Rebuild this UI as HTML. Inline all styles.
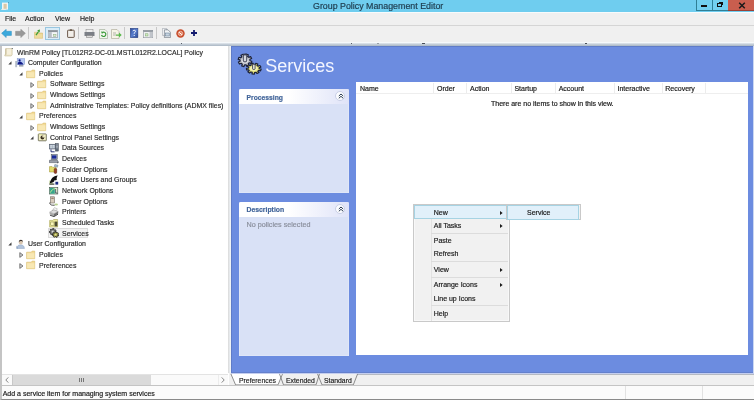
<!DOCTYPE html>
<html><head><meta charset="utf-8">
<style>
*{margin:0;padding:0;box-sizing:border-box}
html,body{width:754px;height:400px;overflow:hidden;background:#f0f0f0}
body{position:relative;filter:opacity(1);font-family:"Liberation Sans",sans-serif;font-size:7px;color:#1a1a1a}
.a{position:absolute}
.t{position:absolute;white-space:pre;line-height:1;-webkit-text-stroke:.18px currentColor}
#title{left:0;top:0;width:754px;height:12px;background:#6fcdef}
#menubar{left:0;top:12px;width:754px;height:14px;background:#f0f0f0;border-top:1px solid #f8fbfc;border-bottom:1px solid #d5d5d5}
#toolbar{left:0;top:26px;width:754px;height:17px;background:#f0f0f0}
#band{left:0;top:42px;width:754px;height:4px;background:linear-gradient(#f6f9fb 0,#f6f9fb 18%,#cdd6df 45%,#aab7c4 100%)}
#left{left:0;top:46px;width:229px;height:340px;background:#fff;border-left:2px solid #c4c4c4}
#split{left:228px;top:46px;width:3px;height:327px;background:linear-gradient(90deg,#d9d9d9,#e9ecef 60%,#f4f7fa)}
#blue{left:231px;top:46px;width:522px;height:326.5px;background:#6c8ce0;box-shadow:inset 1px 1px 0 #5f7cc8,inset 0 -1px 0 #6480cc}
#tabs{left:231px;top:373px;width:523px;height:13px;background:#f0f0f0}
#status{left:0;top:385px;width:754px;height:15px;background:#fbfbfb;border-top:1px solid #c4c4c4;border-bottom:1px solid #8a8a8a;border-left:2px solid #c4c4c4}
.tree .t{font-size:7.8px;transform:scaleX(0.89);transform-origin:0 0;color:#2a2a2a}
.panel{position:absolute;background:#d9e1f6;border-radius:2px 2px 0 0;box-shadow:inset 0 0 0 .6px #e6ebfa}
.phead{position:absolute;left:0;top:0;right:0;height:14px;border-radius:2px 2px 0 0;background:linear-gradient(90deg,#fff 0%,#fff 45%,#dfe3f8 100%)}
.circ{position:absolute;width:10px;height:10px;border-radius:50%;background:#fbfcff;border:1px solid #c9cfe6}
.menu .t{font-size:7px}
</style></head><body>

<!-- title bar -->
<div id="title" class="a">
  <svg class="a" style="left:1px;top:1.5px" width="9" height="9" viewBox="0 0 9 9"><rect x="1" y=".6" width="6" height="7" fill="#f4f6f2"/><rect x="2.5" y="1.8" width="3.2" height="5" fill="#d9c8a8"/><path d="M.3 7.5h4.5" stroke="#e8f0ec" stroke-width="1"/><path d="M7 1l.8-.6" stroke="#3a5a6a" stroke-width=".6"/></svg>
  <div class="t" style="left:313px;top:2px;font-size:8.85px;color:#1d3a4c">Group Policy Management Editor</div>
  <div class="a" style="left:696px;top:0;width:17px;height:11px;border-left:1px solid #2f7f96;border-bottom:1px solid #2f7f96;background:#72d0f0"></div>
  <div class="a" style="left:701px;top:5.3px;width:6px;height:1.6px;background:#111"></div>
  <div class="a" style="left:712px;top:0;width:17px;height:11px;border-left:1px solid #2f7f96;border-bottom:1px solid #2f7f96;background:#72d0f0"></div>
  <div class="a" style="left:717px;top:3px;width:5px;height:4px;border:1.4px solid #111"></div>
  <div class="a" style="left:719px;top:1.5px;width:4px;height:3px;border-top:1px solid #111;border-right:1px solid #111"></div>
  <div class="a" style="left:728px;top:0;width:26px;height:11px;background:#c95e4e;border-bottom:1px solid #9a4034"></div>
  <svg class="a" style="left:738px;top:2px" width="8" height="7" viewBox="0 0 8 7"><path d="M1.2 .8l5.6 5.4M6.8 .8L1.2 6.2" stroke="#1a1a1a" stroke-width="1.5"/></svg>
</div>

<!-- menu bar -->
<div id="menubar" class="a">
  <div class="t" style="left:5px;top:1.9px;font-size:7.6px;transform:scaleX(.92);transform-origin:0 0">File</div>
  <div class="t" style="left:25px;top:1.9px;font-size:7.6px;transform:scaleX(.92);transform-origin:0 0">Action</div>
  <div class="t" style="left:55px;top:1.9px;font-size:7.6px;transform:scaleX(.92);transform-origin:0 0">View</div>
  <div class="t" style="left:80px;top:1.9px;font-size:7.6px;transform:scaleX(.92);transform-origin:0 0">Help</div>
</div>

<!-- toolbar -->
<div id="toolbar" class="a"></div>
<!-- toolbar icons -->
<svg class="a" style="left:1px;top:29px" width="11" height="9" viewBox="0 0 11 9"><path d="M0.6 4.3L5.2 .3v2h5.2v4.1H5.2v2.2z" fill="#3ba9dc" stroke="#2a8cc0" stroke-width=".5" stroke-linejoin="round"/></svg>
<svg class="a" style="left:14.5px;top:29px" width="11" height="9" viewBox="0 0 11 9"><path d="M10.4 4.3L5.8 .3v2H.6v4.1h5.2v2.2z" fill="#989898" stroke="#8a8a8a" stroke-width=".5" stroke-linejoin="round"/></svg>
<div class="a" style="left:27.5px;top:27px;width:1px;height:12px;background:#c8c8c8"></div>
<svg class="a" style="left:34px;top:28.5px" width="9" height="10" viewBox="0 0 9 10"><path d="M.4 3.2h2.6l.8.8h4.8v5.3H.4z" fill="#efdc9c" stroke="#d2b66a" stroke-width=".5"/><path d="M.4 4.6h8.2" stroke="#e2c77e" stroke-width=".5"/><path d="M2 6.2L4.6 2.4" stroke="#3f9e34" stroke-width="1.3"/><path d="M3.2 1.2l2.8-.6-.4 2.9z" fill="#3f9e34"/></svg>
<div class="a" style="left:45.2px;top:26.6px;width:14.7px;height:13.1px;background:#d9ecf8;border:1.2px solid #98c6e0"></div>
<svg class="a" style="left:47.8px;top:30px" width="10" height="8" viewBox="0 0 10 8"><rect x=".3" y=".3" width="9.2" height="7.4" fill="#f4f6f8" stroke="#8c939b" stroke-width=".6"/><rect x=".3" y=".3" width="9.2" height="1.8" fill="#8c939b"/><rect x=".6" y="2.1" width="3.2" height="5.4" fill="#b9bec6"/><rect x="5.6" y="4.2" width="2.4" height="2.2" fill="#d8eccd" stroke="#7a9a6a" stroke-width=".4"/></svg>
<svg class="a" style="left:66.5px;top:29px" width="8" height="9" viewBox="0 0 8 9"><rect x=".6" y="1.2" width="6.6" height="7.2" rx=".5" fill="#f2efea" stroke="#5e4a3a" stroke-width=".9"/><rect x="2.6" y=".3" width="2.6" height="1.6" rx=".4" fill="#6a5a4a"/></svg>
<div class="a" style="left:77.5px;top:27px;width:1px;height:12px;background:#c8c8c8"></div>
<svg class="a" style="left:83.5px;top:29px" width="11" height="9" viewBox="0 0 11 9"><rect x="2" y=".5" width="7" height="3" fill="#eee" stroke="#888" stroke-width=".5"/><rect x=".5" y="3" width="10" height="4" fill="#7b7f86"/><rect x="2.5" y="6.5" width="6" height="2" fill="#ddd" stroke="#777" stroke-width=".5"/></svg>
<svg class="a" style="left:98.5px;top:28.5px" width="9" height="10" viewBox="0 0 9 10"><path d="M.5 .5h5.5l2.5 2.5v6.5H.5z" fill="#f2f6ee" stroke="#9aa890" stroke-width=".6"/><path d="M2.5 6a2.2 2.2 0 1 0 1-2.6" stroke="#3a9a3a" stroke-width="1.2" fill="none"/><path d="M2 2.5l2.5.5-1.5 2z" fill="#3a9a3a"/></svg>
<svg class="a" style="left:111px;top:28.5px" width="11" height="10" viewBox="0 0 11 10"><path d="M.5 .5h5.5l2 2v7H.5z" fill="#f6f4e6" stroke="#a8a490" stroke-width=".6"/><path d="M2 4h3M2 6h3" stroke="#888" stroke-width=".6"/><path d="M5 5.5h3V3.5l2.7 2.5L8 8.5V6.8H5z" fill="#5ab84a"/></svg>
<div class="a" style="left:123.5px;top:27px;width:1px;height:12px;background:#c8c8c8"></div>
<svg class="a" style="left:130px;top:28px" width="8.5" height="10" viewBox="0 0 8.5 10"><defs><linearGradient id="hg" x1="0" y1="0" x2="1" y2="1"><stop offset="0" stop-color="#2c4a9a"/><stop offset=".5" stop-color="#5a80d0"/><stop offset="1" stop-color="#2a4890"/></linearGradient></defs><rect x=".3" y=".3" width="7.6" height="9.4" fill="url(#hg)" stroke="#22387a" stroke-width=".5"/><path d="M2.9 3.2c0-1.3 2.6-1.3 2.6 0 0 1.1-1.3 1.1-1.3 2.5" stroke="#fff" stroke-width="1" fill="none"/><rect x="3.7" y="7" width="1" height="1" fill="#fff"/></svg>
<svg class="a" style="left:143px;top:30px" width="10" height="8" viewBox="0 0 10 8"><rect x=".3" y=".3" width="9.4" height="7.4" fill="#eef0f2" stroke="#8c939b" stroke-width=".6"/><rect x=".3" y=".3" width="9.4" height="1.6" fill="#8c939b"/><rect x="6.6" y="1.9" width="3" height="5.6" fill="#c0c4ca"/><rect x="2.4" y="3.8" width="2.6" height="2.2" fill="#cfe8c0" stroke="#6a9a5a" stroke-width=".4"/></svg>
<div class="a" style="left:155.5px;top:27px;width:1px;height:12px;background:#c8c8c8"></div>
<svg class="a" style="left:162px;top:28.3px" width="9" height="10" viewBox="0 0 9 10"><path d="M.4 .4h4.2v7H.4z" fill="#f6f7f8" stroke="#9aa0a8" stroke-width=".6"/><path d="M2.4 1.8h3.6l2.4 2.4v5.4h-6z" fill="#f2f4f6" stroke="#5a6472" stroke-width=".6"/><rect x="3.6" y="5" width="3.6" height="3" fill="#c8d4e0" stroke="#56708a" stroke-width=".5"/></svg>
<svg class="a" style="left:175.5px;top:28.6px" width="9" height="9" viewBox="0 0 9 9"><circle cx="4.5" cy="4.5" r="4.2" fill="#c84d2c"/><circle cx="4.5" cy="4.5" r="2.2" fill="#e07a5a" stroke="#f4d0c0" stroke-width=".7"/><path d="M3 3.3l3 2.4" stroke="#fff" stroke-width="1"/></svg>
<svg class="a" style="left:190.6px;top:30px" width="6" height="6" viewBox="0 0 6 6"><path d="M2.1 0h1.8v2.1H6v1.8H3.9V6H2.1V3.9H0V2.1h2.1z" fill="#121a6e"/></svg>

<div id="band" class="a"></div>
<div class="a" style="left:180.5px;top:43px;width:1.5px;height:1px;background:#3a3f48;opacity:0.8"></div><div class="a" style="left:350.5px;top:43px;width:1.5px;height:1px;background:#3a3f48;opacity:0.8"></div><div class="a" style="left:377px;top:43px;width:1.5px;height:1px;background:#3a3f48;opacity:0.4"></div><div class="a" style="left:422px;top:43px;width:2.5px;height:1px;background:#3a3f48;opacity:0.9"></div><div class="a" style="left:584.5px;top:43px;width:2px;height:1px;background:#3a3f48;opacity:0.9"></div>

<!-- left pane -->
<div id="left" class="a"></div>
<div class="tree">
<svg class="a" style="left:3.70px;top:47.20px" width="10" height="10" viewBox="0 0 10 10"><path d="M1.8 1.6h6.4v6.2l-1 1.2H.8V7.8l1-.4z" fill="#ece4c8" stroke="#c0b48e" stroke-width=".5"/><rect x="2.6" y="2.2" width="4.6" height="5.4" fill="#f6f0dc"/><path d="M1.8 1.6v6" stroke="#b8aa80" stroke-width=".7"/><circle cx="8.3" cy="1.5" r=".6" fill="#505860"/></svg>
<div class="t" style="left:16.50px;top:48.50px">WinRM Policy [TL012R2-DC-01.MSTL012R2.LOCAL] Policy</div>
<svg class="a" style="left:7.65px;top:61.35px" width="4" height="4" viewBox="0 0 4 4"><path d="M3.5 0.3V3.5H0.3z" fill="#404040"/></svg>
<svg class="a" style="left:14.95px;top:57.85px" width="10" height="10" viewBox="0 0 10 10"><rect x=".2" y="3" width="1.9" height="6.2" fill="#b4bcc8"/><rect x="2.2" y=".7" width="7.4" height="5.9" fill="#b6c8f2" stroke="#7890c8" stroke-width=".5"/><circle cx="4.6" cy="2.4" r="1.1" fill="#101a88"/><path d="M2.6 6.4c.2-1.8 1-2.8 2.2-2.8s2.4.9 3.6 2.8z" fill="#101a88"/><rect x="4" y="7" width="4.4" height="1.6" fill="#9aa2b2"/></svg>
<div class="t" style="left:27.75px;top:59.15px">Computer Configuration</div>
<svg class="a" style="left:18.90px;top:72.00px" width="4" height="4" viewBox="0 0 4 4"><path d="M3.5 0.3V3.5H0.3z" fill="#404040"/></svg>
<svg class="a" style="left:26.20px;top:68.50px" width="10" height="10" viewBox="0 0 10 10"><path d="M.6 2.2h4.6l.9-1.1h2.6v7.6H.6z" fill="#f3dc98" stroke="#d8bb6c" stroke-width=".6"/><rect x="1.1" y="3.2" width="7.3" height="5.1" fill="#f8e8b4"/></svg>
<div class="t" style="left:39.00px;top:69.80px">Policies</div>
<svg class="a" style="left:30.15px;top:81.95px" width="5" height="6" viewBox="0 0 5 6"><path d="M0.8 0.6L4 3 0.8 5.4z" fill="#cfcfcf" stroke="#505050" stroke-width=".7"/></svg>
<svg class="a" style="left:37.45px;top:79.15px" width="10" height="10" viewBox="0 0 10 10"><path d="M.6 2.2h4.6l.9-1.1h2.6v7.6H.6z" fill="#f3dc98" stroke="#d8bb6c" stroke-width=".6"/><rect x="1.1" y="3.2" width="7.3" height="5.1" fill="#f8e8b4"/></svg>
<div class="t" style="left:50.25px;top:80.45px">Software Settings</div>
<svg class="a" style="left:30.15px;top:92.60px" width="5" height="6" viewBox="0 0 5 6"><path d="M0.8 0.6L4 3 0.8 5.4z" fill="#cfcfcf" stroke="#505050" stroke-width=".7"/></svg>
<svg class="a" style="left:37.45px;top:89.80px" width="10" height="10" viewBox="0 0 10 10"><path d="M.6 2.2h4.6l.9-1.1h2.6v7.6H.6z" fill="#f3dc98" stroke="#d8bb6c" stroke-width=".6"/><rect x="1.1" y="3.2" width="7.3" height="5.1" fill="#f8e8b4"/></svg>
<div class="t" style="left:50.25px;top:91.10px">Windows Settings</div>
<svg class="a" style="left:30.15px;top:103.25px" width="5" height="6" viewBox="0 0 5 6"><path d="M0.8 0.6L4 3 0.8 5.4z" fill="#cfcfcf" stroke="#505050" stroke-width=".7"/></svg>
<svg class="a" style="left:37.45px;top:100.45px" width="10" height="10" viewBox="0 0 10 10"><path d="M.6 2.2h4.6l.9-1.1h2.6v7.6H.6z" fill="#f3dc98" stroke="#d8bb6c" stroke-width=".6"/><rect x="1.1" y="3.2" width="7.3" height="5.1" fill="#f8e8b4"/></svg>
<div class="t" style="left:50.25px;top:101.75px">Administrative Templates: Policy definitions (ADMX files)</div>
<svg class="a" style="left:18.90px;top:114.60px" width="4" height="4" viewBox="0 0 4 4"><path d="M3.5 0.3V3.5H0.3z" fill="#404040"/></svg>
<svg class="a" style="left:26.20px;top:111.10px" width="10" height="10" viewBox="0 0 10 10"><path d="M.6 2.2h4.6l.9-1.1h2.6v7.6H.6z" fill="#f3dc98" stroke="#d8bb6c" stroke-width=".6"/><rect x="1.1" y="3.2" width="7.3" height="5.1" fill="#f8e8b4"/></svg>
<div class="t" style="left:39.00px;top:112.40px">Preferences</div>
<svg class="a" style="left:30.15px;top:124.55px" width="5" height="6" viewBox="0 0 5 6"><path d="M0.8 0.6L4 3 0.8 5.4z" fill="#cfcfcf" stroke="#505050" stroke-width=".7"/></svg>
<svg class="a" style="left:37.45px;top:121.75px" width="10" height="10" viewBox="0 0 10 10"><path d="M.6 2.2h4.6l.9-1.1h2.6v7.6H.6z" fill="#f3dc98" stroke="#d8bb6c" stroke-width=".6"/><rect x="1.1" y="3.2" width="7.3" height="5.1" fill="#f8e8b4"/></svg>
<div class="t" style="left:50.25px;top:123.05px">Windows Settings</div>
<svg class="a" style="left:30.15px;top:135.90px" width="4" height="4" viewBox="0 0 4 4"><path d="M3.5 0.3V3.5H0.3z" fill="#404040"/></svg>
<svg class="a" style="left:37.45px;top:132.40px" width="10" height="10" viewBox="0 0 10 10"><rect x="1.3" y="1.9" width="8" height="6.9" rx=".6" fill="#f2eec6" stroke="#4a4a30" stroke-width=".7"/><path d="M1.8 2.4h3.2" stroke="#dfe89c" stroke-width=".8"/><circle cx="5.4" cy="5.5" r="1.9" fill="#3a3020"/><path d="M5.4 5.5V3.6a1.9 1.9 0 0 1 1.9 1.9z" fill="#f2eec6"/></svg>
<div class="t" style="left:50.25px;top:133.70px">Control Panel Settings</div>
<svg class="a" style="left:49.00px;top:143.05px" width="10" height="10" viewBox="0 0 10 10"><rect x=".4" y="1.2" width="6" height="4.8" fill="#8c96a6" stroke="#3e4a5a" stroke-width=".5"/><rect x="1.2" y="2" width="4.4" height="3.2" fill="#dfe6ee"/><path d="M1.2 3.1h4.4M1.2 4.2h4.4M3.4 2v3.2" stroke="#8090a0" stroke-width=".35"/><rect x="6.4" y=".5" width="3" height="7.6" fill="#5e6a78" stroke="#2e3440" stroke-width=".4"/><path d="M6.8 2h2.2M6.8 3.4h2.2M6.8 4.8h2.2" stroke="#e8ecf0" stroke-width=".5"/><path d="M2 6.4v2.4h3.6" stroke="#14206a" stroke-width=".9" fill="none"/></svg>
<div class="t" style="left:61.80px;top:144.35px">Data Sources</div>
<svg class="a" style="left:49.00px;top:153.70px" width="10" height="10" viewBox="0 0 10 10"><rect x="2.2" y=".6" width="6" height="4.8" fill="#a8b0bc" stroke="#3a4450" stroke-width=".5"/><rect x="3" y="1.4" width="4.4" height="3.2" fill="#1a2a9a"/><path d="M.6 6.2h7.8l1 2.4H.2z" fill="#9aa0aa" stroke="#3a4250" stroke-width=".5"/><path d="M8 9.2l1.4-1.2" stroke="#333" stroke-width=".6"/></svg>
<div class="t" style="left:61.80px;top:155.00px">Devices</div>
<svg class="a" style="left:49.00px;top:164.35px" width="10" height="10" viewBox="0 0 10 10"><path d="M.5 2.6h2.6l.8.8h3.2v4.6H.5z" fill="#e4dc6a" stroke="#9c9030" stroke-width=".5"/><rect x="5.2" y="4.4" width="2.5" height="5" rx="1" fill="#9a4028" stroke="#5a2010" stroke-width=".5"/><path d="M5.8 .5l3.2.7-.5 2-3.2-.7z" fill="#a8c0d8" stroke="#506070" stroke-width=".4"/></svg>
<div class="t" style="left:61.80px;top:165.65px">Folder Options</div>
<svg class="a" style="left:49.00px;top:175.00px" width="10" height="10" viewBox="0 0 10 10"><path d="M.4 9.6V5.2l4.6 4.4z" fill="#c6d89c"/><path d="M.8 8.2C1.8 4 4 .8 8.8.6 7.8 2 7.4 3.4 7.8 5L5.6 5.6C5 7 3.8 8 .8 8.2z" fill="#101010"/><path d="M5.6 5.6c.6 1 1.6 1.4 3 1.2" stroke="#f4f4f4" stroke-width=".8" fill="none"/><rect x="6.4" y="6.8" width="2.8" height="2.8" fill="#1a2a80"/><rect x=".4" y="8.6" width="5" height="1" fill="#2a2a2a"/></svg>
<div class="t" style="left:61.80px;top:176.30px">Local Users and Groups</div>
<svg class="a" style="left:49.00px;top:185.65px" width="10" height="10" viewBox="0 0 10 10"><rect x=".5" y="1.6" width="8.3" height="6.4" fill="#e6eed0" stroke="#3a4a40" stroke-width=".6"/><path d="M.8 1.9h5v5.8H.8z" fill="#38a68c"/><path d="M1.4 6.6c1-2.5 2.5-3.6 4.6-4" stroke="#c4ea94" stroke-width=".9" fill="none"/><path d="M6.6 3v4h1.8" stroke="#203050" stroke-width=".7" fill="none"/></svg>
<div class="t" style="left:61.80px;top:186.95px">Network Options</div>
<svg class="a" style="left:49.00px;top:196.30px" width="10" height="10" viewBox="0 0 10 10"><rect x="1.4" y=".8" width="4.2" height="6.2" fill="#d8ccbe" stroke="#605850" stroke-width=".5"/><rect x="2.3" y="1.6" width="2.4" height="1.4" fill="#a08070"/><path d="M.7 6.6c0 1.8 1.4 2.6 3 2.6h2" stroke="#202020" stroke-width=".8" fill="none"/><ellipse cx="7.2" cy="8.6" rx="1.8" ry="1" fill="#b8d090"/></svg>
<div class="t" style="left:61.80px;top:197.60px">Power Options</div>
<svg class="a" style="left:49.00px;top:206.95px" width="10" height="10" viewBox="0 0 10 10"><path d="M3.2 3.6L5.4.6l3 1.2-2.2 3z" fill="#f8f8f8" stroke="#8a8a8a" stroke-width=".4"/><path d="M.6 5.2l4.2-2.4 4.4 1.6-4.2 2.5z" fill="#dcdcdc" stroke="#777" stroke-width=".4"/><path d="M.6 5.2v2.1l4.4 1.9V6.9z" fill="#a8a8a8"/><path d="M5 6.9v2.3l4.2-2.6V4.4z" fill="#6e6e6e"/><path d="M1 8.2l4 1.4 4-2.4" stroke="#1e1e1e" stroke-width=".8" fill="none"/></svg>
<div class="t" style="left:61.80px;top:208.25px">Printers</div>
<svg class="a" style="left:49.00px;top:217.60px" width="10" height="10" viewBox="0 0 10 10"><path d="M.6 2.4h3.2l.8-.9h4v7.6H.6z" fill="#ece89a" stroke="#9a9440" stroke-width=".5"/><rect x="5.6" y="3.6" width="2.8" height="4.8" fill="#4a4a30"/><rect x="1.8" y="4" width="3.2" height="3.6" fill="#f8f4b8" stroke="#6a6a30" stroke-width=".4"/></svg>
<div class="t" style="left:61.80px;top:218.90px">Scheduled Tasks</div>
<div class="a" style="left:48.2px;top:228.45px;width:40.2px;height:10px;background:#f3f3f3;border:1px solid #dcdcdc"></div>
<svg class="a" style="left:49.00px;top:228.25px" width="10" height="10" viewBox="0 0 10 10"><path d="M6.3 4.1 L7.1 4.4 L6.6 5.6 L5.8 5.3 L5.1 5.8 L5.3 6.7 L4.0 7.0 L3.8 6.2 L2.9 6.0 L2.4 6.7 L1.3 6.0 L1.8 5.3 L1.4 4.5 L0.5 4.6 L0.4 3.3 L1.4 3.3 L1.7 2.5 L1.1 1.8 L2.1 1.0 L2.7 1.7 L3.6 1.4 L3.7 0.6 L5.1 0.8 L4.9 1.7 L5.6 2.1 L6.4 1.7 L7.1 2.9 L6.2 3.3Z" fill="#8c8c8c" stroke="#1a1a1a" stroke-width=".8"/><circle cx="3.8" cy="3.8" r="1" fill="#d8d8d8"/><path d="M9.0 6.7 L9.9 6.9 L9.5 8.0 L8.6 7.7 L8.0 8.2 L8.4 9.0 L7.2 9.4 L6.8 8.6 L6.0 8.6 L5.5 9.3 L4.4 8.7 L4.9 8.0 L4.4 7.4 L3.5 7.6 L3.3 6.4 L4.2 6.3 L4.5 5.7 L3.8 5.1 L4.7 4.3 L5.4 4.9 L6.1 4.6 L6.2 3.8 L7.5 3.9 L7.4 4.7 L8.1 5.0 L8.9 4.6 L9.6 5.5 L8.9 6.0Z" fill="#a8a648" stroke="#1a1a1a" stroke-width=".8"/><ellipse cx="6.6" cy="6.6" rx="1" ry=".9" fill="#e0e0a0"/></svg>
<div class="t" style="left:61.80px;top:229.55px">Services</div>
<svg class="a" style="left:7.65px;top:242.40px" width="4" height="4" viewBox="0 0 4 4"><path d="M3.5 0.3V3.5H0.3z" fill="#404040"/></svg>
<svg class="a" style="left:14.95px;top:238.90px" width="10" height="10" viewBox="0 0 10 10"><path d="M1.8 9.6c0-2.6 1.6-3.8 3.8-3.8s3.8 1.2 3.8 3.8z" fill="#b2c4dc" stroke="#8aa0c0" stroke-width=".5"/><path d="M1.5 6.5l1.5 3h-1.5z" fill="#8aa0c0"/><circle cx="5.8" cy="3.6" r="2" fill="#d9c6b0"/><path d="M3.8 3.3c0-1.8 1-2.5 2.1-2.5s2 .8 2 2.3c-.6-.8-1.4-1-2-1-.8 0-1.5.4-2.1 1.2z" fill="#3a302a"/></svg>
<div class="t" style="left:27.75px;top:240.20px">User Configuration</div>
<svg class="a" style="left:18.90px;top:252.35px" width="5" height="6" viewBox="0 0 5 6"><path d="M0.8 0.6L4 3 0.8 5.4z" fill="#cfcfcf" stroke="#505050" stroke-width=".7"/></svg>
<svg class="a" style="left:26.20px;top:249.55px" width="10" height="10" viewBox="0 0 10 10"><path d="M.6 2.2h4.6l.9-1.1h2.6v7.6H.6z" fill="#f3dc98" stroke="#d8bb6c" stroke-width=".6"/><rect x="1.1" y="3.2" width="7.3" height="5.1" fill="#f8e8b4"/></svg>
<div class="t" style="left:39.00px;top:250.85px">Policies</div>
<svg class="a" style="left:18.90px;top:263.00px" width="5" height="6" viewBox="0 0 5 6"><path d="M0.8 0.6L4 3 0.8 5.4z" fill="#cfcfcf" stroke="#505050" stroke-width=".7"/></svg>
<svg class="a" style="left:26.20px;top:260.20px" width="10" height="10" viewBox="0 0 10 10"><path d="M.6 2.2h4.6l.9-1.1h2.6v7.6H.6z" fill="#f3dc98" stroke="#d8bb6c" stroke-width=".6"/><rect x="1.1" y="3.2" width="7.3" height="5.1" fill="#f8e8b4"/></svg>
<div class="t" style="left:39.00px;top:261.50px">Preferences</div>
</div>
<div id="split" class="a"></div>

<!-- right blue pane -->
<div id="blue" class="a"></div>
<div class="a" style="left:753px;top:46px;width:1px;height:327px;background:#cad7f2"></div>
<!-- big title -->
<svg class="a" style="left:234px;top:50px" width="30" height="28" viewBox="0 0 30 28">
  <path d="M15.98 10.70 L17.82 11.25 L17.04 13.36 L15.22 12.77 L14.21 13.82 L15.10 15.41 L12.92 16.40 L12.09 14.79 L10.56 14.88 L9.97 16.58 L7.67 15.86 L8.32 14.18 L7.17 13.26 L5.45 14.07 L4.37 12.07 L6.12 11.30 L6.02 9.90 L4.18 9.35 L4.96 7.24 L6.78 7.83 L7.79 6.78 L6.90 5.19 L9.08 4.20 L9.91 5.81 L11.44 5.72 L12.03 4.02 L14.33 4.74 L13.68 6.42 L14.83 7.34 L16.55 6.53 L17.63 8.53 L15.88 9.30Z" fill="#c2c4ca" stroke="#1c2138" stroke-width="1.2" stroke-linejoin="round"/>
  <ellipse cx="11" cy="10.5" rx="3.2" ry="2.8" fill="#e2e4ea"/>
  <path d="M9.3 4.5h3.4v6.5a1.7 .9 0 0 1-3.4 0z" fill="#d6d8de" stroke="#1c2138" stroke-width=".8"/>
  <ellipse cx="11" cy="4.5" rx="1.7" ry=".9" fill="#3a3f55"/>
  <path d="M25.19 18.78 L27.16 19.15 L26.57 20.80 L24.61 20.41 L23.78 21.30 L24.97 22.52 L23.08 23.51 L21.92 22.28 L20.50 22.56 L20.35 24.06 L18.04 23.92 L18.23 22.42 L16.90 21.97 L15.48 23.05 L13.83 21.84 L15.27 20.78 L14.65 19.80 L12.63 19.95 L12.42 18.24 L14.44 18.12 L14.81 17.07 L13.13 16.22 L14.45 14.81 L16.11 15.68 L17.31 15.05 L16.76 13.61 L18.99 13.16 L19.51 14.61 L20.97 14.70 L21.81 13.33 L23.91 14.05 L23.04 15.41 L24.09 16.17 L25.92 15.52 L26.90 17.07 L25.06 17.70Z" fill="#e2e07a" stroke="#1c2138" stroke-width="1.2" stroke-linejoin="round"/>
  <ellipse cx="19.8" cy="18.6" rx="3.8" ry="2.5" fill="#f4f2b4"/>
  <path d="M18.5 14.2h2.6v4.6a1.3 .7 0 0 1-2.6 0z" fill="#dcdcd2" stroke="#1c2138" stroke-width=".7"/>
</svg>
<div class="t" style="left:265.3px;top:57.4px;font-size:18px;color:#f4f6ff;-webkit-text-stroke:0">Services</div>

<!-- processing panel -->
<div class="panel" style="left:239px;top:89px;width:110px;height:104px">
  <div class="phead" style="height:15px"></div>
  <div class="t" style="left:7.5px;top:5.9px;font-size:6.75px;font-weight:bold;color:#42659a">Processing</div>
  <div class="circ" style="left:96px;top:2px"></div>
  <svg class="a" style="left:98.5px;top:4.3px" width="6" height="6" viewBox="0 0 6 6"><path d="M.8 3L3 1 5.2 3M.8 5.3L3 3.3 5.2 5.3" fill="none" stroke="#2a3a50" stroke-width="1"/></svg>
</div>
<!-- description panel -->
<div class="panel" style="left:239px;top:202px;width:110px;height:153.5px">
  <div class="phead" style="height:15px"></div>
  <div class="t" style="left:7.5px;top:5.2px;font-size:6.85px;font-weight:bold;color:#42659a">Description</div>
  <div class="circ" style="left:96px;top:1.5px"></div>
  <svg class="a" style="left:98.5px;top:3.8px" width="6" height="6" viewBox="0 0 6 6"><path d="M.8 3L3 1 5.2 3M.8 5.3L3 3.3 5.2 5.3" fill="none" stroke="#2a3a50" stroke-width="1"/></svg>
  <div class="t" style="left:7.5px;top:18.8px;font-size:7.2px;color:#8a8f9c">No policies selected</div>
</div>

<!-- table -->
<div class="a" style="left:356.3px;top:82.3px;width:391.5px;height:273.2px;background:#fff"></div>
<div class="a" style="left:356.3px;top:82.3px;width:391.5px;height:11.5px;background:#fff;border-bottom:1px solid #eeeeee"></div>
<div class="a" style="left:433px;top:83px;width:1px;height:10px;background:#ececec"></div>
<div class="a" style="left:466px;top:83px;width:1px;height:10px;background:#ececec"></div>
<div class="a" style="left:510.5px;top:83px;width:1px;height:10px;background:#ececec"></div>
<div class="a" style="left:555px;top:83px;width:1px;height:10px;background:#ececec"></div>
<div class="a" style="left:614px;top:83px;width:1px;height:10px;background:#ececec"></div>
<div class="a" style="left:661.5px;top:83px;width:1px;height:10px;background:#ececec"></div>
<div class="a" style="left:704.5px;top:83px;width:1px;height:10px;background:#ececec"></div>
<div class="t" style="left:360px;top:84.5px">Name</div>
<div class="t" style="left:437px;top:84.5px">Order</div>
<div class="t" style="left:470px;top:84.5px">Action</div>
<div class="t" style="left:514.4px;top:84.5px">Startup</div>
<div class="t" style="left:558.7px;top:84.5px">Account</div>
<div class="t" style="left:617.5px;top:84.5px">Interactive</div>
<div class="t" style="left:665.3px;top:84.5px">Recovery</div>
<div class="t" style="left:491px;top:100.3px">There are no items to show in this view.</div>


<div id="tabs" class="a"></div>
<!-- left hscroll -->
<div class="a" style="left:2px;top:373.5px;width:226px;height:12px;background:#fafafa;border-top:1px solid #e3e3e3"></div>
<div class="a" style="left:12.5px;top:374.5px;width:138.5px;height:10.5px;background:#dadada"></div>
<div class="a" style="left:12px;top:374.5px;width:1px;height:10.5px;background:#c8c8c8"></div>
<div class="a" style="left:217.5px;top:374.5px;width:1px;height:10.5px;background:#ececec"></div>
<svg class="a" style="left:5px;top:377px" width="4" height="6" viewBox="0 0 4 6"><path d="M3.3 .4L.8 3l2.5 2.6" fill="none" stroke="#6a6a6a" stroke-width=".8"/></svg>
<svg class="a" style="left:221px;top:377px" width="4" height="6" viewBox="0 0 4 6"><path d="M.7 .4L3.2 3 .7 5.6" fill="none" stroke="#6a6a6a" stroke-width=".8"/></svg>
<div class="a" style="left:79.3px;top:377.5px;width:1px;height:4px;background:#777"></div>
<div class="a" style="left:81px;top:377.5px;width:1px;height:4px;background:#777"></div>
<div class="a" style="left:82.7px;top:377.5px;width:1px;height:4px;background:#777"></div>
<!-- tabs -->
<div class="a" style="left:231px;top:372.5px;width:523px;height:1px;background:#c4cef0"></div>
<div class="a" style="left:231px;top:373.5px;width:523px;height:1px;background:#b6bac2"></div>
<svg class="a" style="left:228px;top:373px" width="135" height="13" viewBox="0 0 135 13">
  <path d="M89.5 .9L94 11.9H125.3L129.6 .9z" fill="#f0f0f0"/>
  <path d="M51.5 .9L55.5 11.9H88L91.5 .9z" fill="#f0f0f0"/>
  <path d="M2.9 .9L7.6 11.9H50L54.5 .9z" fill="#fff"/>
  <g fill="none" stroke="#6a6a6a" stroke-width=".75">
  <path d="M89.5 .9L94 11.9H125.3L129.6 .9"/>
  <path d="M51.5 .9L55.5 11.9H88L91.5 .9"/>
  <path d="M2.9 .9L7.6 11.9H50L54.5 .9"/>
  </g>
</svg>
<div class="t" style="left:238.5px;top:376.6px;font-size:7.6px;transform:scaleX(.9);transform-origin:0 0">Preferences</div>
<div class="t" style="left:285.6px;top:376.6px;font-size:7.6px;transform:scaleX(.9);transform-origin:0 0">Extended</div>
<div class="t" style="left:323.6px;top:376.6px;font-size:7.6px;transform:scaleX(.9);transform-origin:0 0">Standard</div>

<div id="status" class="a">
  <div class="t" style="left:0.7px;top:4px;font-size:7px">Add a service item for managing system services</div>
</div>

<div class="a" style="left:624.5px;top:386px;width:1px;height:13px;background:#e2e2e2"></div>
<div class="a" style="left:702px;top:386px;width:1px;height:13px;background:#e2e2e2"></div>

<!-- context menu -->
<div class="a menu" style="left:413px;top:204px;width:97px;height:118px;background:#f1f1f1;border:1px solid #c9c9c9;box-shadow:inset 0 0 0 1px #f8f8f8">
</div>
<div class="a" style="left:430.5px;top:219px;width:1px;height:102px;background:#e2e2e2"></div>
<div class="a" style="left:414px;top:205.3px;width:95px;height:14px;background:#e1f0fa;border:1px solid #a6d3e3"></div>
<div class="a" style="left:431px;top:233px;width:77px;height:1px;background:#dcdcdc"></div>
<div class="a" style="left:431px;top:260.5px;width:77px;height:1px;background:#dcdcdc"></div>
<div class="a" style="left:431px;top:276.5px;width:77px;height:1px;background:#dcdcdc"></div>
<div class="a" style="left:431px;top:305px;width:77px;height:1px;background:#dcdcdc"></div>
<div class="t" style="left:433.8px;top:208.8px;font-size:7px">New</div>
<div class="t" style="left:433.8px;top:221.5px;font-size:7px">All Tasks</div>
<div class="t" style="left:433.8px;top:237px;font-size:7px">Paste</div>
<div class="t" style="left:433.8px;top:250px;font-size:7px">Refresh</div>
<div class="t" style="left:433.8px;top:265.6px;font-size:7px">View</div>
<div class="t" style="left:433.8px;top:281px;font-size:7px">Arrange Icons</div>
<div class="t" style="left:433.8px;top:294.5px;font-size:7px">Line up Icons</div>
<div class="t" style="left:433.8px;top:309.5px;font-size:7px">Help</div>
<svg class="a" style="left:499.5px;top:210.5px" width="3" height="4" viewBox="0 0 3 4"><path d="M0 0l2.6 2L0 4z" fill="#1a1a1a"/></svg>
<svg class="a" style="left:499.5px;top:223.5px" width="3" height="4" viewBox="0 0 3 4"><path d="M0 0l2.6 2L0 4z" fill="#1a1a1a"/></svg>
<svg class="a" style="left:499.5px;top:267.7px" width="3" height="4" viewBox="0 0 3 4"><path d="M0 0l2.6 2L0 4z" fill="#1a1a1a"/></svg>
<svg class="a" style="left:499.5px;top:283px" width="3" height="4" viewBox="0 0 3 4"><path d="M0 0l2.6 2L0 4z" fill="#1a1a1a"/></svg>
<!-- submenu -->
<div class="a" style="left:506px;top:204.2px;width:75px;height:16.3px;background:#f1f1f1;border:1px solid #c9c9c9"></div>
<div class="a" style="left:507.3px;top:205.4px;width:72px;height:14.2px;background:#e1f0fa;border:1px solid #a6d3e3"></div>
<div class="t" style="left:527px;top:209px;font-size:7px">Service</div>

</body></html>
